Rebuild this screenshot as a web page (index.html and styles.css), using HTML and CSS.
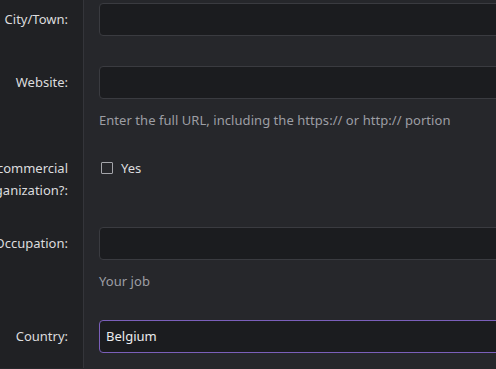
FILE: index.html
```html
<!DOCTYPE html>
<html>
<head>
<meta charset="utf-8">
<link rel="stylesheet" href="styles.css">
</head>
<body>
<div class="form">
  <div class="row">
    <div class="label">City/Town:</div>
    <div class="field"><div class="input"></div></div>
  </div>
  <div class="row">
    <div class="label">Website:</div>
    <div class="field">
      <div class="input"></div>
      <div class="hint">Enter the full URL, including the https:// or http:// portion</div>
    </div>
  </div>
  <div class="row row-check">
    <div class="label">Non-commercial organization?:</div>
    <div class="field">
      <label class="check"><span class="box"></span><span>Yes</span></label>
    </div>
  </div>
  <div class="row">
    <div class="label">Occupation:</div>
    <div class="field">
      <div class="input"></div>
      <div class="hint">Your job</div>
    </div>
  </div>
  <div class="row">
    <div class="label">Country:</div>
    <div class="field"><div class="input focus">Belgium</div></div>
  </div>
</div>
</body>
</html>
```
FILE: styles.css
```css
html, body {
  margin: 0;
  padding: 0;
  background: #26272b;
  overflow: hidden;
  width: 496px;
  height: 369px;
}
body {
  font-family: "Noto Sans", "Open Sans", sans-serif;
  font-size: 13px;
  color: #dcdcde;
}
.form {
  margin-top: -12px;
  margin-left: -96px;
  width: 900px;
}
.row {
  display: grid;
  grid-template-columns: 180px 1fr;
}
.label {
  background: #202124;
  border-right: 1px solid #34353a;
  text-align: right;
  padding: 20px 15px 0 15px;
  line-height: 22px;
  color: #dcdcde;
}
.field {
  padding: 15px 0 15px 15px;
}
.input {
  box-sizing: border-box;
  height: 33px;
  background: #1b1c1f;
  border: 1px solid #3a3b40;
  border-radius: 4px;
  padding: 0 6px;
  line-height: 31px;
  color: #ececee;
}
.input.focus {
  border-color: #7b5fba;
}
.hint {
  margin-top: 12px;
  line-height: 18px;
  color: #9d9ea4;
  letter-spacing: 0.05px;
}
.row-check .label {
  padding: 13px 15px 11px 15px;
}
.row-check .field {
  padding: 13px 0 0 15px;
}
.check {
  display: flex;
  align-items: center;
  gap: 8px;
  height: 22px;
  color: #dcdcde;
}
.box {
  box-sizing: border-box;
  width: 12px;
  height: 12px;
  margin-left: 2px;
  border: 1.5px solid #a4a5aa;
  border-radius: 1px;
}
```
